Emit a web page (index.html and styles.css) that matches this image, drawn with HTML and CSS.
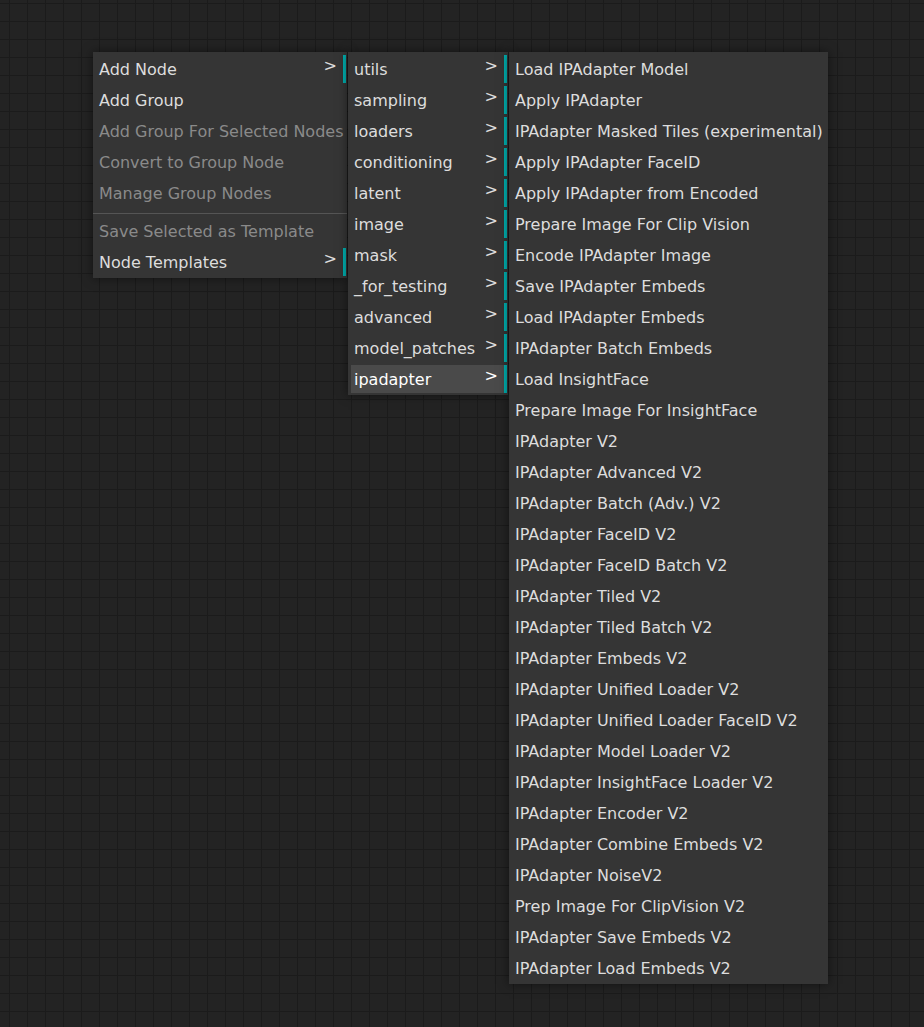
FILE: index.html
```html
<!DOCTYPE html>
<html>
<head>
<meta charset="utf-8">
<link rel="stylesheet" href="styles.css">
</head>
<body>
<div class="canvas">
  <div class="menu m1">
    <div class="entry sub">Add Node</div>
    <div class="entry">Add Group</div>
    <div class="entry disabled">Add Group For Selected Nodes</div>
    <div class="entry disabled">Convert to Group Node</div>
    <div class="entry disabled">Manage Group Nodes</div>
    <div class="sep"></div>
    <div class="entry disabled">Save Selected as Template</div>
    <div class="entry sub">Node Templates</div>
  </div>
  <div class="menu m2">
    <div class="entry sub">utils</div>
    <div class="entry sub">sampling</div>
    <div class="entry sub">loaders</div>
    <div class="entry sub">conditioning</div>
    <div class="entry sub">latent</div>
    <div class="entry sub">image</div>
    <div class="entry sub">mask</div>
    <div class="entry sub">_for_testing</div>
    <div class="entry sub">advanced</div>
    <div class="entry sub">model_patches</div>
    <div class="entry sub hover">ipadapter</div>
  </div>
  <div class="menu m3">
    <div class="entry">Load IPAdapter Model</div>
    <div class="entry">Apply IPAdapter</div>
    <div class="entry">IPAdapter Masked Tiles (experimental)</div>
    <div class="entry">Apply IPAdapter FaceID</div>
    <div class="entry">Apply IPAdapter from Encoded</div>
    <div class="entry">Prepare Image For Clip Vision</div>
    <div class="entry">Encode IPAdapter Image</div>
    <div class="entry">Save IPAdapter Embeds</div>
    <div class="entry">Load IPAdapter Embeds</div>
    <div class="entry">IPAdapter Batch Embeds</div>
    <div class="entry">Load InsightFace</div>
    <div class="entry">Prepare Image For InsightFace</div>
    <div class="entry">IPAdapter V2</div>
    <div class="entry">IPAdapter Advanced V2</div>
    <div class="entry">IPAdapter Batch (Adv.) V2</div>
    <div class="entry">IPAdapter FaceID V2</div>
    <div class="entry">IPAdapter FaceID Batch V2</div>
    <div class="entry">IPAdapter Tiled V2</div>
    <div class="entry">IPAdapter Tiled Batch V2</div>
    <div class="entry">IPAdapter Embeds V2</div>
    <div class="entry">IPAdapter Unified Loader V2</div>
    <div class="entry">IPAdapter Unified Loader FaceID V2</div>
    <div class="entry">IPAdapter Model Loader V2</div>
    <div class="entry">IPAdapter InsightFace Loader V2</div>
    <div class="entry">IPAdapter Encoder V2</div>
    <div class="entry">IPAdapter Combine Embeds V2</div>
    <div class="entry">IPAdapter NoiseV2</div>
    <div class="entry">Prep Image For ClipVision V2</div>
    <div class="entry">IPAdapter Save Embeds V2</div>
    <div class="entry">IPAdapter Load Embeds V2</div>
  </div>
</div>
</body>
</html>
```
FILE: styles.css
```css
html, body {
  margin: 0;
  padding: 0;
  background: #222;
}
.canvas {
  position: relative;
  width: 924px;
  height: 1027px;
  overflow: hidden;
  background-color: #232323;
  background-image:
    linear-gradient(to right, #1b1b1b 1px, transparent 1px),
    linear-gradient(to bottom, #1b1b1b 1px, transparent 1px);
  background-size: 18px 18px;
  background-position: 9px 3px;
  font-family: "DejaVu Sans", sans-serif;
  font-size: 16px;
}
.menu {
  position: absolute;
  top: 52px;
  box-sizing: border-box;
  background: #353535;
  padding: 3px 1px 2px 3px;
  box-shadow: 0 0 10px rgba(0, 0, 0, 0.5);
  color: #dddddd;
}
.m1 { left: 93px; width: 254px; }
.m2 { left: 348px; width: 160px; }
.m3 { left: 509px; width: 319px; }

.entry {
  position: relative;
  height: 28px;
  line-height: 30px;
  padding-left: 3px;
  white-space: nowrap;
  box-sizing: border-box;
}
.entry + .entry { margin-top: 3px; }
.entry.disabled { color: #8a8a8a; }
.entry.sub { border-right: 3px solid #00adad; }
.entry.sub::after {
  content: ">";
  position: absolute;
  right: 6px;
  top: -4px;
  color: #dddddd;
}
.entry.hover {
  background: #4a4a4a;
  color: #ffffff;
}
.entry.hover::after { color: #ffffff; }
.sep {
  height: 1px;
  background: #555555;
  margin: 6px -1px 3px -3px;
}
```
